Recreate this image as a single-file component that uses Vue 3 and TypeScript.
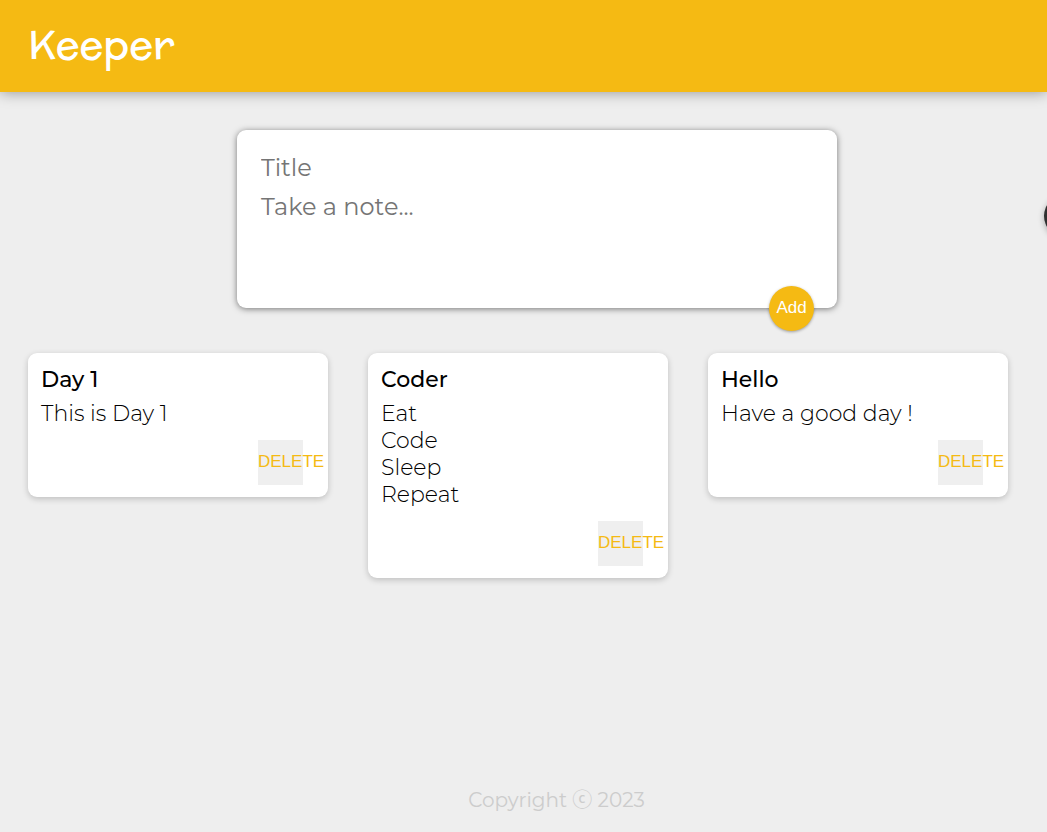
<script setup lang="ts">
import { ref } from 'vue'

interface Note {
  id: number
  title: string
  content: string
}

const title = ref('')
const content = ref('')
const notes = ref<Note[]>([
  { id: 1, title: 'Day 1', content: 'This is Day 1' },
  { id: 2, title: 'Coder', content: 'Eat\nCode\nSleep\nRepeat' },
  { id: 3, title: 'Hello', content: 'Have a good day !' },
])

function addNote() {
  if (!title.value && !content.value) return
  notes.value.push({ id: Date.now(), title: title.value, content: content.value })
  title.value = ''
  content.value = ''
}

function removeNote(id: number) {
  notes.value = notes.value.filter((note) => note.id !== id)
}
</script>

<template>
  <div class="page">
    <header class="header">
      <h1 class="brand">Keeper</h1>
    </header>
    <main class="main">
      <form class="create" @submit.prevent="addNote">
        <input v-model="title" class="field" type="text" placeholder="Title" aria-label="Title" />
        <textarea v-model="content" class="field" rows="3" placeholder="Take a note..." aria-label="Take a note"></textarea>
        <button class="add" type="submit">Add</button>
      </form>
      <section class="notes">
        <article v-for="note in notes" :key="note.id" class="note">
          <h2 class="note-title">{{ note.title }}</h2>
          <p class="note-text">{{ note.content }}</p>
          <button class="delete" type="button" @click="removeNote(note.id)">DELETE</button>
        </article>
      </section>
    </main>
    <footer class="footer">
      <p class="copyright">Copyright ⓒ 2023</p>
    </footer>
    <div class="side-handle"></div>
  </div>
</template>

<style>
body {
  background: #eee;
}
</style>

<style scoped>
.page {
  position: relative;
  display: flex;
  flex-direction: column;
  min-height: 100vh;
  overflow: hidden;
  background: #eee;
  font-family: Montserrat, Inter, "Noto Sans CJK KR", sans-serif;
}

.header {
  padding: 15px 28px 17px;
  background: #f5ba13;
  box-shadow: 0 0 14px rgba(0, 0, 0, 0.4);
}

.brand {
  margin: 0;
  color: #fff;
  font-family: "McLaren", Lato, sans-serif;
  font-size: 40px;
  line-height: 60px;
  font-weight: 500;
}

.main {
  flex: 1;
  padding: 38px 1px 0 28px;
}

.create {
  position: relative;
  box-sizing: border-box;
  max-width: 600px;
  margin: 0 auto 45px;
  padding: 20px 22px;
  border-radius: 9px;
  background: #fff;
  box-shadow: 0 1px 6px rgba(0, 0, 0, 0.5);
}

.field {
  display: block;
  box-sizing: border-box;
  width: 100%;
  margin: 0;
  padding: 0 2px;
  border: 0;
  outline: 0;
  background: transparent;
  color: #000;
  font-family: inherit;
  font-size: 24px;
  line-height: 33px;
  resize: none;
}

input.field {
  height: 34px;
  margin-bottom: 6px;
}

textarea.field {
  height: 98px;
}

.field::placeholder {
  color: #757575;
  opacity: 1;
}

.add {
  position: absolute;
  right: 23px;
  bottom: -23px;
  width: 45px;
  height: 45px;
  padding: 0 0 2px;
  border: 0;
  border-radius: 50%;
  background: #f5ba13;
  box-shadow: 0 1px 3px rgba(0, 0, 0, 0.35);
  color: #fff;
  font-family: "Liberation Sans", Arial, sans-serif;
  font-size: 17px;
}

.notes {
  display: flex;
  flex-wrap: wrap;
  align-items: flex-start;
  gap: 40px;
}

.note {
  display: flex;
  flex-direction: column;
  box-sizing: border-box;
  width: 300px;
  padding: 12px 13px;
  border-radius: 9px;
  background: #fff;
  box-shadow: 0 2px 6px rgba(0, 0, 0, 0.2);
}

.note-title {
  margin: 0 0 6px;
  font-size: 22px;
  line-height: 29px;
  font-weight: 500;
}

.note-text {
  margin: 0 0 13px;
  font-size: 22px;
  line-height: 27px;
  font-weight: 300;
  white-space: pre-wrap;
}

.delete {
  align-self: flex-end;
  display: flex;
  align-items: center;
  justify-content: flex-start;
  width: 45px;
  height: 45px;
  margin-right: 12px;
  padding: 0 0 2px;
  border: 0;
  background: #efefef;
  color: #f5ba13;
  font-family: "Liberation Sans", Arial, sans-serif;
  font-size: 17px;
}

.footer {
  padding: 0 0 18px 66px;
  text-align: center;
}

.copyright {
  margin: 0;
  color: #ccc;
  font-size: 20px;
  line-height: 28px;
}

.side-handle {
  position: absolute;
  top: 195px;
  right: -39px;
  width: 42px;
  height: 42px;
  border-radius: 50%;
  background: #303030;
  box-shadow: 0 2px 6px rgba(0, 0, 0, 0.3);
}
</style>
